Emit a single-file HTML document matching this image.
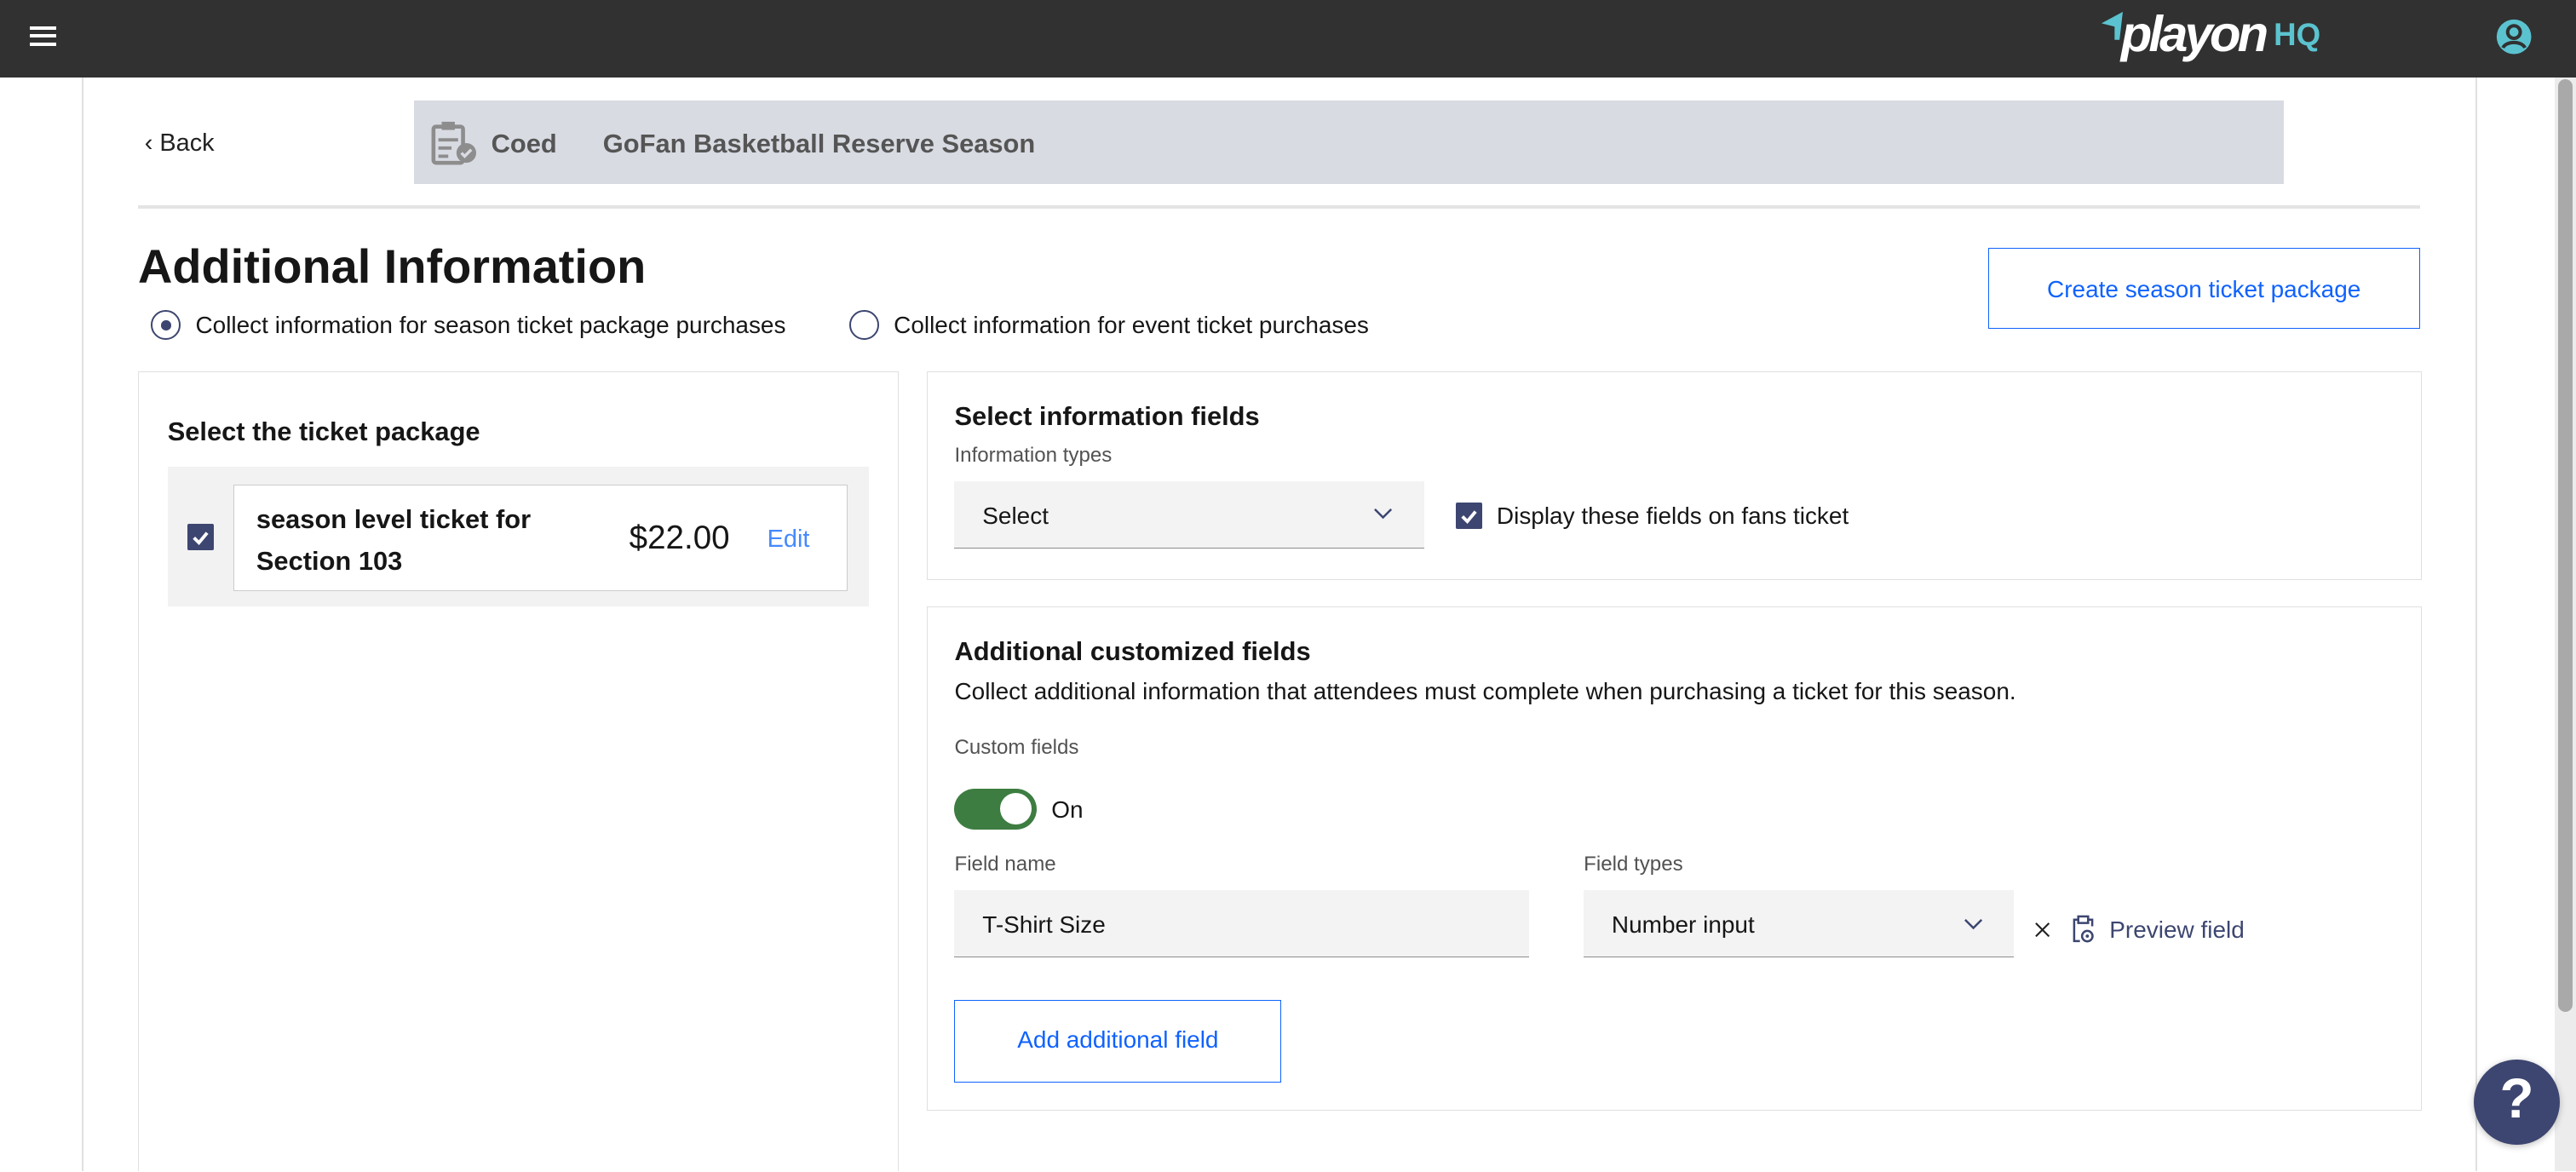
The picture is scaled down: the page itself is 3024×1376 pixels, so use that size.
<!DOCTYPE html>
<html><head><meta charset="utf-8"><style>
html{margin:0;padding:0;width:3024px;height:1376px;overflow:hidden;background:#fff;}
body{margin:0;padding:0;width:1568px;height:713px;zoom:1.92857;overflow:hidden;position:relative;background:#fff;font-family:"Liberation Sans",sans-serif;color:#161616;}
.a{position:absolute;}
.t{position:absolute;white-space:nowrap;line-height:1;}
.box{position:absolute;border:1px solid #e0e0e0;box-sizing:border-box;}
.cb{position:absolute;width:16px;height:16px;background:#3d4670;border-radius:1px;}
.cb svg{position:absolute;left:0;top:0}
</style></head><body>
<!-- header -->
<div class="a" style="left:0;top:0;width:1568px;height:47px;background:#313131"></div>
<div class="a" style="left:18px;top:16px;width:16px;height:2px;background:#fff"></div>
<div class="a" style="left:18px;top:21px;width:16px;height:2px;background:#fff"></div>
<div class="a" style="left:18px;top:26px;width:16px;height:2px;background:#fff"></div>
<svg class="a" style="left:1278px;top:6px" width="20" height="22" viewBox="0 0 20 22"><path d="M1 8 L14 1 L12 18 L9 18 L9 10 Z" fill="#5bc3cf"/></svg>
<div class="t" style="left:1291px;top:5px;font-size:31px;font-weight:bold;font-style:italic;color:#fff;letter-spacing:-2px">playon</div>
<div class="t" style="left:1384px;top:12px;font-size:19px;font-weight:bold;color:#5bc3cf">HQ</div>
<svg class="a" style="left:1519px;top:11px" width="23" height="23" viewBox="0 0 24 24"><circle cx="12" cy="12" r="11" fill="#5bc3cf"/><circle cx="12" cy="9" r="4" fill="none" stroke="#313131" stroke-width="2.2"/><path d="M5 19 C7 14.5 17 14.5 19 19" fill="none" stroke="#313131" stroke-width="2.2"/></svg>
<!-- page frame -->
<div class="a" style="left:50px;top:47px;width:1px;height:666px;background:#e0e0e0"></div>
<div class="a" style="left:1507px;top:47px;width:1px;height:666px;background:#e0e0e0"></div>
<div class="a" style="left:1555px;top:47px;width:13px;height:666px;background:#ececec"></div>
<div class="a" style="left:1557px;top:48px;width:9px;height:568px;background:#a9a9a9;border-radius:5px"></div>
<!-- top nav -->
<div class="t" style="left:88px;top:80px;font-size:15px;color:#222">‹ Back</div>
<div class="a" style="left:252px;top:61px;width:1138px;height:51px;background:#d8dbe2"></div>
<svg class="a" style="left:262px;top:73px" width="30" height="28" viewBox="0 0 30 28"><rect x="2" y="4" width="18" height="22" rx="1.5" fill="none" stroke="#8d8d8d" stroke-width="2.4"/><rect x="7" y="1" width="8" height="5" fill="#8d8d8d"/><path d="M5 12h12M5 17h8M5 22h6" stroke="#8d8d8d" stroke-width="2"/><circle cx="22" cy="20" r="6" fill="#8d8d8d"/><path d="M19 20l2 2 4-4" stroke="#d8dbe2" stroke-width="1.8" fill="none"/></svg>
<div class="t" style="left:299px;top:80px;font-size:16px;font-weight:bold;color:#555">Coed</div>
<div class="t" style="left:367px;top:80px;font-size:16px;font-weight:bold;color:#555">GoFan Basketball Reserve Season</div>
<div class="a" style="left:84px;top:125px;width:1389px;height:2px;background:#e4e4e4"></div>
<!-- title -->
<div class="t" style="left:84px;top:148px;font-size:29px;font-weight:600">Additional Information</div>
<div class="a" style="left:92px;top:189px;width:18px;height:18px;border:1.5px solid #3d4670;border-radius:50%;box-sizing:border-box"></div>
<div class="a" style="left:98px;top:195px;width:6px;height:6px;background:#3d4670;border-radius:50%"></div>
<div class="t" style="left:119px;top:191px;font-size:14.5px">Collect information for season ticket package purchases</div>
<div class="a" style="left:517px;top:189px;width:18px;height:18px;border:1.5px solid #3d4670;border-radius:50%;box-sizing:border-box"></div>
<div class="t" style="left:544px;top:191px;font-size:14.5px">Collect information for event ticket purchases</div>
<div class="a" style="left:1210px;top:151px;width:263px;height:49px;border:1px solid #0f62fe;box-sizing:border-box"></div>
<div class="t" style="left:1210px;top:169px;width:263px;text-align:center;font-size:14.5px;color:#0f62fe">Create season ticket package</div>
<!-- left panel -->
<div class="a" style="left:84px;top:226px;width:463px;height:487px;border:1px solid #e0e0e0;border-bottom:none;box-sizing:border-box"></div>
<div class="t" style="left:102px;top:255px;font-size:16px;font-weight:bold">Select the ticket package</div>
<div class="a" style="left:102px;top:284px;width:427px;height:85px;background:#f2f2f2"></div>
<div class="cb" style="left:114px;top:319px"><svg width="16" height="16"><path d="M4 8.5l3 3 5-6" stroke="#fff" stroke-width="2" fill="none"/></svg></div>
<div class="a" style="left:142px;top:295px;width:374px;height:65px;background:#fff;border:1px solid #ccc;box-sizing:border-box"></div>
<div class="t" style="left:156px;top:304px;font-size:16px;font-weight:bold;line-height:25px">season level ticket for<br>Section 103</div>
<div class="t" style="left:383px;top:318px;font-size:20px">$22.00</div>
<div class="t" style="left:467px;top:321px;font-size:15px;color:#4589ff">Edit</div>
<!-- right panel 1 -->
<div class="box" style="left:564px;top:226px;width:910px;height:127px"></div>
<div class="t" style="left:581px;top:246px;font-size:16px;font-weight:bold">Select information fields</div>
<div class="t" style="left:581px;top:271px;font-size:12.5px;color:#525252">Information types</div>
<div class="a" style="left:581px;top:293px;width:286px;height:41px;background:#f3f3f3;border-bottom:1px solid #8d8d8d;box-sizing:border-box"></div>
<div class="t" style="left:598px;top:307px;font-size:14.5px">Select</div>
<svg class="a" style="left:836px;top:308px" width="12" height="10"><path d="M1 2l5 5 5-5" stroke="#3d4670" stroke-width="1.3" fill="none"/></svg>
<div class="cb" style="left:886px;top:306px"><svg width="16" height="16"><path d="M4 8.5l3 3 5-6" stroke="#fff" stroke-width="2" fill="none"/></svg></div>
<div class="t" style="left:911px;top:307px;font-size:14.5px">Display these fields on fans ticket</div>
<!-- right panel 2 -->
<div class="box" style="left:564px;top:369px;width:910px;height:307px"></div>
<div class="t" style="left:581px;top:389px;font-size:16px;font-weight:bold">Additional customized fields</div>
<div class="t" style="left:581px;top:414px;font-size:14.5px">Collect additional information that attendees must complete when purchasing a ticket for this season.</div>
<div class="t" style="left:581px;top:449px;font-size:12.5px;color:#525252">Custom fields</div>
<div class="a" style="left:581px;top:480px;width:50px;height:25px;background:#3d7d41;border-radius:13px"></div>
<div class="a" style="left:609px;top:483px;width:19px;height:19px;background:#fff;border-radius:50%"></div>
<div class="t" style="left:640px;top:486px;font-size:14.5px">On</div>
<div class="t" style="left:581px;top:520px;font-size:12.5px;color:#525252">Field name</div>
<div class="a" style="left:581px;top:542px;width:350px;height:41px;background:#f3f3f3;border-bottom:1px solid #8d8d8d;box-sizing:border-box"></div>
<div class="t" style="left:598px;top:556px;font-size:14.5px">T-Shirt Size</div>
<div class="t" style="left:964px;top:520px;font-size:12.5px;color:#525252">Field types</div>
<div class="a" style="left:964px;top:542px;width:262px;height:41px;background:#f3f3f3;border-bottom:1px solid #8d8d8d;box-sizing:border-box"></div>
<div class="t" style="left:981px;top:556px;font-size:14.5px">Number input</div>
<svg class="a" style="left:1195px;top:558px" width="12" height="10"><path d="M1 2l5 5 5-5" stroke="#3d4670" stroke-width="1.3" fill="none"/></svg>
<svg class="a" style="left:1238px;top:561px" width="10" height="10"><path d="M1 1l8 8M9 1l-8 8" stroke="#222" stroke-width="1.1"/></svg>
<svg class="a" style="left:1261px;top:557px" width="14" height="18" viewBox="0 0 14 18"><path d="M4 3H1.5v13H5M10 3h2.5v4" fill="none" stroke="#3d4670" stroke-width="1.3"/><rect x="4" y="1" width="6" height="4" fill="none" stroke="#3d4670" stroke-width="1.3"/><circle cx="9.5" cy="13" r="3.2" fill="none" stroke="#3d4670" stroke-width="1.3"/><circle cx="9.5" cy="13" r="1" fill="#3d4670"/></svg>
<div class="t" style="left:1284px;top:559px;font-size:14.5px;color:#3d4670">Preview field</div>
<div class="a" style="left:581px;top:609px;width:199px;height:50px;border:1px solid #0f62fe;box-sizing:border-box"></div>
<div class="t" style="left:581px;top:626px;width:199px;text-align:center;font-size:14.5px;color:#0f62fe">Add additional field</div>
<!-- help -->
<div class="a" style="left:1506px;top:645px;width:52px;height:52px;background:#3d4670;border-radius:50%;box-shadow:0 1px 4px rgba(0,0,0,.25)"></div>
<div class="t" style="left:1506px;top:652px;width:52px;text-align:center;font-size:34px;font-weight:bold;color:#fff">?</div>
</body></html>
